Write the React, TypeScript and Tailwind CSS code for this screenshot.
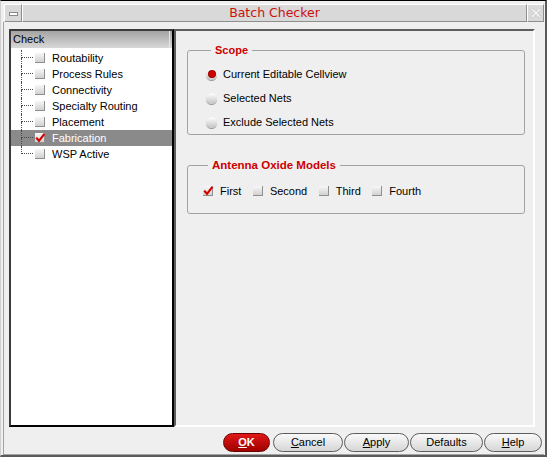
import React from 'react'

const treeItems = [
  'Routability',
  'Process Rules',
  'Connectivity',
  'Specialty Routing',
  'Placement',
  'Fabrication',
  'WSP Active',
]

const CheckBox = ({ checked = false }: { checked?: boolean }) => (
  <span className="inline-flex w-[10px] h-[10px] shrink-0 bg-gradient-to-b from-[#f7f7f7] to-[#d2d2d2] border-b border-r border-[#8f8f8f] overflow-visible">
    {checked && (
      <svg width="10" height="10" viewBox="0 0 10 10" className="overflow-visible">
        <path d="M1.2 4.6 L4 7.8 L9.4 0.8" fill="none" stroke="#d40000" strokeWidth="2.2" />
      </svg>
    )}
  </span>
)

const Radio = ({ on = false }: { on?: boolean }) => (
  <span className="inline-flex items-center justify-center w-[11px] h-[11px] shrink-0 rounded-full bg-gradient-to-b from-[#ffffff] to-[#c4c4c4] shadow-[0_1px_0_#9a9a9a]">
    {on && <span className="w-[6px] h-[6px] rounded-full bg-[#d00000] shadow-[0_0_0_1px_#9b0000]" />}
  </span>
)

const Btn = ({ w, first, rest, ml }: { w: string; first: string; rest: string; ml: string }) => (
  <button
    className={`${w} ${ml} h-[19px] rounded-full border border-[#5c5c5c] bg-gradient-to-b from-[#fafafa] to-[#d6d6d6] text-[11px] text-black leading-none`}
  >
    <span className="underline">{first}</span>
    {rest}
  </button>
)

const App = () => {
  return (
    <div className="w-[547px] h-[457px] bg-[#efefef] border-t border-l border-t-black border-l-[#cfcfcf] border-r-2 border-b-2 border-r-[#5a5a5a] border-b-[#5a5a5a] flex flex-col font-['Liberation_Sans',Arial,sans-serif] text-[11px] text-black">
      {/* Title bar */}
      <div className="ml-[3px] mt-[3px] w-[540px] h-[18px] flex">
        <div className="w-[18px] h-full bg-[#d9d9d9] border-t border-l border-white border-b border-r border-b-[#8e8e8e] border-r-[#8e8e8e] flex items-center justify-center">
          <span className="w-[9px] h-[4px] bg-white border border-[#8a8a8a] mt-[1px]" />
        </div>
        <div className="flex-1 h-full bg-[#d9d9d9] border-t border-l border-white border-b border-r border-b-[#8e8e8e] border-r-[#8e8e8e] flex items-center justify-center text-[#cc1010] text-[12.5px] font-['DejaVu_Sans',sans-serif]">
          Batch Checker
        </div>
        <div className="w-[17px] h-full bg-[#d9d9d9] border-t border-l border-white border-b border-r border-b-[#8e8e8e] border-r-[#8e8e8e] flex items-center justify-center">
          <svg width="12" height="12" viewBox="0 0 12 12">
            <path
              d="M1 2.5 L2.5 1 L6 4.5 L9.5 1 L11 2.5 L7.5 6 L11 9.5 L9.5 11 L6 7.5 L2.5 11 L1 9.5 L4.5 6 Z"
              fill="#f4f4f4"
              stroke="#b4b4b4"
              strokeWidth="1"
              strokeDasharray="1 1"
            />
          </svg>
        </div>
      </div>

      {/* Content */}
      <div className="ml-[2px] w-[541px] flex-1 border-l border-b border-[#a2a2a2] flex flex-col">
        <div className="flex pt-[7px]">
          {/* Tree panel */}
          <div className="ml-[5px] w-[165px] h-[398px] bg-white border-2 border-t-[#3c3c3c] border-l-[#3c3c3c] border-r-black border-b-black">
            <div className="flex h-[17px]">
              <div className="w-[159px] h-full bg-gradient-to-b from-[#a4a4a4] to-[#d8d8d8] border-r border-[#e6e6e6] flex items-center pl-[2px]">
                Check
              </div>
              <div className="flex-1 h-full bg-gradient-to-b from-[#a4a4a4] to-[#d8d8d8]" />
            </div>
            <div className="mt-[2px]">
              {treeItems.map((t, i) => {
                const sel = t === 'Fabrication'
                const last = i === treeItems.length - 1
                return (
                  <div key={t} className={`flex h-4 items-center ${sel ? 'bg-[#8a8a8a] text-white' : ''}`}>
                    <div className="ml-[10px] w-[12px] h-full flex flex-col">
                      <div className="h-[8px] border-l border-b border-dotted border-[#4a4a4a]" />
                      <div className={`flex-1 ${last ? '' : 'border-l border-dotted border-[#4a4a4a]'}`} />
                    </div>
                    <span className="ml-[2px] flex">
                      <CheckBox checked={sel} />
                    </span>
                    <span className="ml-[7px]">{t}</span>
                  </div>
                )
              })}
            </div>
          </div>

          {/* Settings panel */}
          <div className="w-[361px] h-[398px] border-2 border-t-[#5e5e5e] border-l-[#5e5e5e] border-r-white border-b-white">
            <fieldset className="ml-[11px] mt-[13px] w-[338px] border border-[#a3a3a3] rounded-[3px] pl-[18px] pt-[5px]">
              <legend className="ml-[5px] px-[4px] text-[#cc0000] font-bold text-[11px] leading-[13px]">Scope</legend>
              {['Current Editable Cellview', 'Selected Nets', 'Exclude Selected Nets'].map((r, i) => (
                <div key={r} className="flex items-center h-6">
                  <Radio on={i === 0} />
                  <span className="ml-[6px]">{r}</span>
                </div>
              ))}
            </fieldset>

            <fieldset className="ml-[11px] mt-[24px] w-[338px] border border-[#a3a3a3] rounded-[3px] pl-[15px] pt-[9px] pb-[12px]">
              <legend className="ml-[5px] px-[4px] text-[#cc0000] font-bold text-[11.5px] leading-[13px]">
                Antenna Oxide Models
              </legend>
              <div className="flex items-center h-5 gap-[11.5px]">
                {['First', 'Second', 'Third', 'Fourth'].map((c, i) => (
                  <div key={c} className="flex items-center">
                    <CheckBox checked={i === 0} />
                    <span className="ml-[7px]">{c}</span>
                  </div>
                ))}
              </div>
            </fieldset>
          </div>
        </div>

        {/* Buttons */}
        <div className="flex justify-end pr-[2px] mt-[6px]">
          <button className="w-[47px] h-[19px] rounded-full border border-[#6a0000] bg-gradient-to-b from-[#e01818] to-[#a00000] text-white font-bold text-[11px] leading-none">
            <span className="underline">O</span>K
          </button>
          <Btn w="w-[70px]" ml="ml-[3px]" first="C" rest="ancel" />
          <Btn w="w-[65px]" ml="ml-[1px]" first="A" rest="pply" />
          <Btn w="w-[73px]" ml="ml-[1px]" first="" rest="Defaults" />
          <Btn w="w-[58px]" ml="ml-[1px]" first="H" rest="elp" />
        </div>
      </div>
    </div>
  )
}

export default App
